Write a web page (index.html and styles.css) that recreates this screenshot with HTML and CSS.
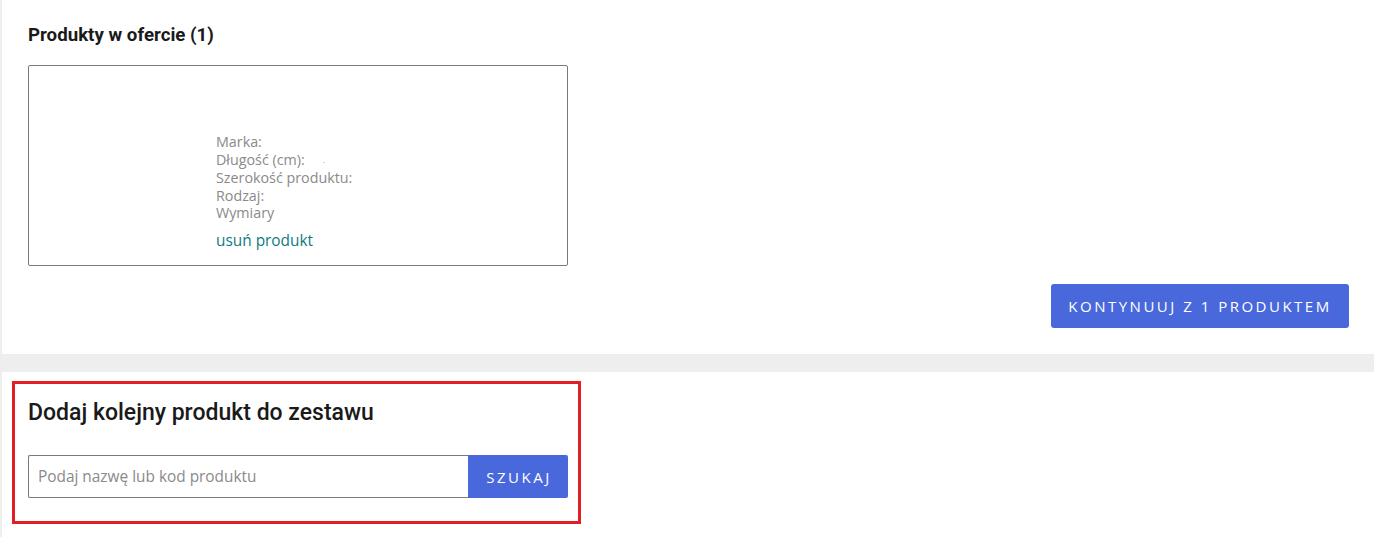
FILE: index.html
```html
<!DOCTYPE html>
<html lang="pl">
<head>
<meta charset="utf-8">
<title>Produkty w ofercie</title>
<link rel="stylesheet" href="styles.css">
</head>
<body>
<section class="panel panel-offer">
  <h2 class="offer-title">Produkty w ofercie (1)</h2>
  <div class="product-card">
    <div class="product-image"></div>
    <div class="product-info">
      <ul class="product-attrs">
        <li>Marka:</li>
        <li>Długość (cm):<span class="attr-dot">.</span></li>
        <li>Szerokość produktu:</li>
        <li>Rodzaj:</li>
        <li>Wymiary</li>
      </ul>
      <a class="remove-link" href="#">usuń produkt</a>
    </div>
  </div>
  <div class="offer-actions">
    <button class="btn btn-continue" type="button">Kontynuuj z 1 produktem</button>
  </div>
</section>
<section class="panel panel-add">
  <div class="add-box">
    <h2 class="add-title">Dodaj kolejny produkt do zestawu</h2>
    <form class="search-form">
      <input class="search-input" type="text" placeholder="Podaj nazwę lub kod produktu">
      <button class="btn btn-search" type="button">Szukaj</button>
    </form>
  </div>
</section>
</body>
</html>
```

FILE: styles.css
```css
* { box-sizing: border-box; }

html, body {
  margin: 0;
  background: #eeeeee;
}

body {
  padding-left: 2px;
  font-family: "Open Sans", "Liberation Sans", sans-serif;
  font-size: 14px;
  color: #333;
}

.panel {
  background: #ffffff;
}

.panel-offer {
  padding: 24px 25px 26px 26px;
  margin-bottom: 18px;
}

.offer-title {
  margin: 0 0 18px;
  font-family: Roboto, "Liberation Sans", sans-serif;
  font-weight: 700;
  font-size: 18.7px;
  line-height: 23px;
  color: #1a1a1a;
}

.product-card {
  width: 540px;
  height: 201px;
  border: 1px solid #7a7a7a;
  border-radius: 2px;
  display: flex;
}

.product-image {
  width: 187px;
  flex: none;
}

.product-info {
  padding-top: 67px;
}

.product-attrs {
  list-style: none;
  margin: 0;
  padding: 0;
  font-size: 14.3px;
  line-height: 17.5px;
  color: #8a8a8a;
}

.attr-dot {
  margin-left: 18px;
  font-size: 7px;
  vertical-align: 2px;
  color: #888;
}

.remove-link {
  display: block;
  margin-top: 9px;
  font-size: 15.4px;
  line-height: 19px;
  color: #0f7b80;
  text-decoration: none;
}

.offer-actions {
  display: flex;
  justify-content: flex-end;
  margin-top: 18px;
}

.btn {
  border: none;
  background: #4968db;
  color: #ffffff;
  font-family: "Open Sans", "Liberation Sans", sans-serif;
  font-weight: 500;
  font-size: 15px;
  text-transform: uppercase;
  letter-spacing: 2.5px;
  cursor: pointer;
}

.btn-continue {
  height: 44px;
  width: 298px;
  border-radius: 3px;
  padding: 0;
}

.panel-add {
  padding: 9px 0 13px 10px;
}

.add-box {
  width: 569px;
  border: 3px solid #e31e24;
  padding: 15px 10px 23px 13px;
}

.add-title {
  margin: 0 0 29px;
  font-family: Roboto, "Liberation Sans", sans-serif;
  font-weight: 500;
  font-size: 23px;
  line-height: 27px;
  color: #1a1a1a;
}

.search-form {
  display: flex;
  height: 43px;
  margin: 0;
}

.search-input {
  width: 440px;
  height: 43px;
  border: 1px solid #7a7a7a;
  border-right: none;
  border-radius: 2px 0 0 2px;
  padding: 0 9px;
  font-family: "Open Sans", "Liberation Sans", sans-serif;
  font-size: 15.4px;
  color: #333;
  outline: none;
}

.search-input::placeholder {
  color: #8a8a8a;
}

.btn-search {
  width: 100px;
  height: 43px;
  border-radius: 0 2px 2px 0;
  padding: 0 0 0 2px;
}
```
